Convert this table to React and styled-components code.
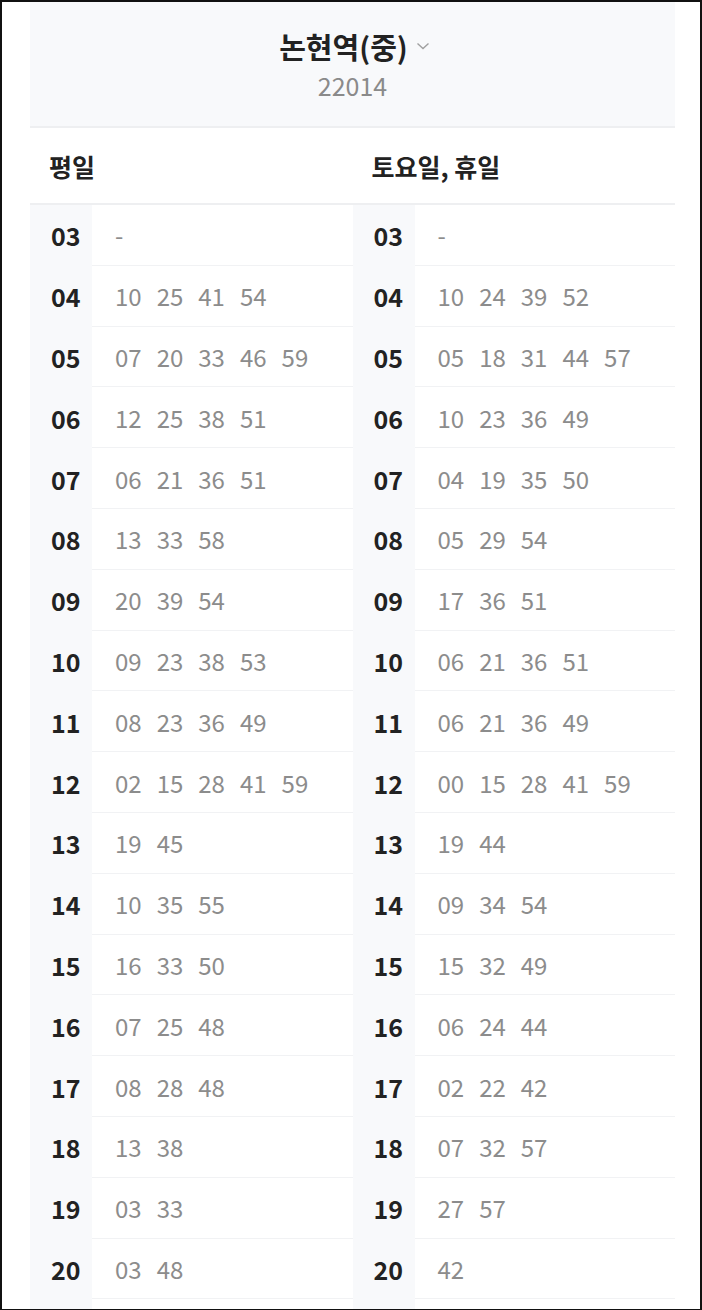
import React from 'react'
import styled, { createGlobalStyle } from 'styled-components'

const weekday = [
  ['03', []],
  ['04', ['10', '25', '41', '54']],
  ['05', ['07', '20', '33', '46', '59']],
  ['06', ['12', '25', '38', '51']],
  ['07', ['06', '21', '36', '51']],
  ['08', ['13', '33', '58']],
  ['09', ['20', '39', '54']],
  ['10', ['09', '23', '38', '53']],
  ['11', ['08', '23', '36', '49']],
  ['12', ['02', '15', '28', '41', '59']],
  ['13', ['19', '45']],
  ['14', ['10', '35', '55']],
  ['15', ['16', '33', '50']],
  ['16', ['07', '25', '48']],
  ['17', ['08', '28', '48']],
  ['18', ['13', '38']],
  ['19', ['03', '33']],
  ['20', ['03', '48']],
]

const holiday = [
  ['03', []],
  ['04', ['10', '24', '39', '52']],
  ['05', ['05', '18', '31', '44', '57']],
  ['06', ['10', '23', '36', '49']],
  ['07', ['04', '19', '35', '50']],
  ['08', ['05', '29', '54']],
  ['09', ['17', '36', '51']],
  ['10', ['06', '21', '36', '51']],
  ['11', ['06', '21', '36', '49']],
  ['12', ['00', '15', '28', '41', '59']],
  ['13', ['19', '44']],
  ['14', ['09', '34', '54']],
  ['15', ['15', '32', '49']],
  ['16', ['06', '24', '44']],
  ['17', ['02', '22', '42']],
  ['18', ['07', '32', '57']],
  ['19', ['27', '57']],
  ['20', ['42']],
]

const Global = createGlobalStyle`
  html, body {
    margin: 0;
    padding: 0;
    background: #fff;
  }
  body {
    font-family: "Noto Sans CJK KR", "Noto Sans", sans-serif;
  }
`

const Frame = styled.div`
  box-sizing: border-box;
  height: 1310px;
  border: 2px solid #111;
  border-bottom-width: 1px;
  overflow: hidden;
  padding: 0 25px 0 28px;
  display: flex;
  flex-direction: column;
`

const Header = styled.header`
  flex: none;
  height: 124px;
  background: #f8f9fb;
  border-bottom: 2px solid #eeeff1;
  display: flex;
  flex-direction: column;
  align-items: center;
  justify-content: center;
  gap: 2px;
`

const TitleLine = styled.div`
  display: flex;
  align-items: center;
  gap: 8px;
  padding-left: 4px;
`

const Title = styled.h1`
  margin: 0;
  font-size: 29px;
  font-weight: 700;
  line-height: 40px;
  color: #222;
`

const Code = styled.div`
  font-size: 25px;
  line-height: 34px;
  color: #8a8a8a;
`

const DayRow = styled.div`
  flex: none;
  display: grid;
  grid-template-columns: 1fr 1fr;
  height: 75px;
  border-bottom: 2px solid #eeeff1;
`

const DayLabel = styled.div`
  display: flex;
  align-items: center;
  padding-left: ${p => p.$pad}px;
  font-size: 25px;
  font-weight: 700;
  color: #222;
`

const Columns = styled.div`
  flex: 1;
  display: grid;
  grid-template-columns: 1fr 1fr;
`

const Column = styled.div`
  display: flex;
  flex-direction: column;
  background: linear-gradient(to right, #f8f9fb 62px, #fff 62px);
`

const Row = styled.div`
  display: flex;
  height: 60.8px;
`

const Hour = styled.div`
  width: 62px;
  flex: none;
  box-sizing: border-box;
  padding-left: 21px;
  display: flex;
  align-items: center;
  background: #f8f9fb;
  font-size: 25px;
  font-weight: 700;
  color: #222;
`

const Minutes = styled.div`
  flex: 1;
  display: flex;
  align-items: center;
  gap: 15px;
  padding-left: 23px;
  border-bottom: 1px solid #f1f2f4;
  font-size: 24px;
  color: #8c8c8c;
  background: #fff;
`

const Chevron = () => (
  <svg width="14" height="10" viewBox="0 0 14 10" fill="none">
    <path d="M1.5 2.5 L7 7.5 L12.5 2.5" stroke="#a0a0a0" strokeWidth="1.4" />
  </svg>
)

const Timetable = ({ data }) => (
  <Column>
    {data.map(([hour, mins]) => (
      <Row key={hour}>
        <Hour>{hour}</Hour>
        <Minutes>
          {mins.length ? mins.map(m => <span key={m}>{m}</span>) : <span>-</span>}
        </Minutes>
      </Row>
    ))}
  </Column>
)

export default function App() {
  return (
    <Frame>
      <Global />
      <Header>
        <TitleLine>
          <Title>논현역(중)</Title>
          <Chevron />
        </TitleLine>
        <Code>22014</Code>
      </Header>
      <DayRow>
        <DayLabel $pad={19}>평일</DayLabel>
        <DayLabel $pad={19}>토요일, 휴일</DayLabel>
      </DayRow>
      <Columns>
        <Timetable data={weekday} />
        <Timetable data={holiday} />
      </Columns>
    </Frame>
  )
}
